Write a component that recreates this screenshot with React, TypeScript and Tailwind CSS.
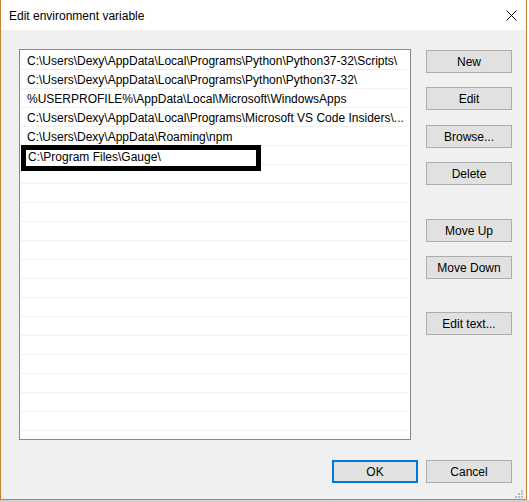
import React from "react";

const rows = [
  "C:\\Users\\Dexy\\AppData\\Local\\Programs\\Python\\Python37-32\\Scripts\\",
  "C:\\Users\\Dexy\\AppData\\Local\\Programs\\Python\\Python37-32\\",
  "%USERPROFILE%\\AppData\\Local\\Microsoft\\WindowsApps",
  "C:\\Users\\Dexy\\AppData\\Local\\Programs\\Microsoft VS Code Insiders\\...",
  "C:\\Users\\Dexy\\AppData\\Roaming\\npm",
];

function Btn({ label, className = "" }: { label: string; className?: string }) {
  return (
    <div
      className={
        "w-[86px] h-[23px] shrink-0 flex items-center justify-center bg-[#e1e1e1] border border-[#adadad] text-[12px] text-black leading-none " +
        className
      }
    >
      {label}
    </div>
  );
}

export default function App() {
  const empties = Array.from({ length: 16 });
  return (
    <div
      className="w-[529px] h-[502px] bg-white flex flex-col overflow-hidden"
      style={{ fontFamily: '"Liberation Sans", Arial, sans-serif' }}
    >
      <div className="w-[527px] h-[500px] border-l border-r border-b border-[#c98234] flex flex-col shrink-0">
        {/* Title bar */}
        <div className="h-[30px] bg-white flex items-center justify-between shrink-0">
          <span className="pl-[8px] text-[12px] text-black pt-[1px]">Edit environment variable</span>
          <svg width="11" height="11" viewBox="0 0 11 11" className="mr-[9px]">
            <path d="M0.5 0.5 L10.5 10.5 M10.5 0.5 L0.5 10.5" stroke="#000" strokeWidth="1" />
          </svg>
        </div>
        {/* Body */}
        <div className="flex-1 bg-[#f0f0f0] flex flex-col relative">
          <div className="flex pl-[18px] pt-[19px]">
            {/* List */}
            <div className="w-[392px] h-[391px] border border-[#828790] bg-white pt-[1px] overflow-hidden shrink-0">
              {rows.map((r) => (
                <div
                  key={r}
                  className="h-[19px] mx-[1px] mr-[3px] border-b border-[#f0f0f0] pl-[6px] pt-[2px] text-[12px] leading-[16px] text-black whitespace-nowrap overflow-hidden"
                >
                  {r}
                </div>
              ))}
              <div className="h-[19px] mx-[1px] mr-[3px] border-b border-[#f0f0f0] relative">
                <div className="absolute left-0 top-[-1px] w-[240px] h-[26px] border-[5px] border-black bg-white pl-[2px] text-[12px] leading-[15px] text-black whitespace-nowrap">
                  C:\Program Files\Gauge\
                </div>
              </div>
              {empties.map((_, i) => (
                <div key={i} className="h-[19px] mx-[1px] mr-[3px] border-b border-[#f0f0f0]" />
              ))}
            </div>
            {/* Right buttons */}
            <div className="flex flex-col ml-[15px] pt-[1px]">
              <Btn label="New" />
              <Btn label="Edit" className="mt-[14px]" />
              <Btn label="Browse..." className="mt-[15px]" />
              <Btn label="Delete" className="mt-[14px]" />
              <Btn label="Move Up" className="mt-[34px]" />
              <Btn label="Move Down" className="mt-[14px]" />
              <Btn label="Edit text..." className="mt-[33px]" />
            </div>
          </div>
          <div className="flex justify-end gap-[8px] pr-[14px] mt-[20px]">
            <div className="w-[86px] h-[23px] flex items-center justify-center bg-[#e1e1e1] border-2 border-[#0078d7] text-[12px] text-black leading-none">
              OK
            </div>
            <Btn label="Cancel" />
          </div>
          {/* resize grip */}
          <svg width="8" height="8" viewBox="0 0 8 8" className="absolute right-[3px] bottom-[1px]">
            <rect x="6" y="0" width="2" height="2" fill="#bcbcbc" />
            <rect x="3" y="3" width="2" height="2" fill="#bcbcbc" />
            <rect x="6" y="3" width="2" height="2" fill="#bcbcbc" />
            <rect x="0" y="6" width="2" height="2" fill="#bcbcbc" />
            <rect x="3" y="6" width="2" height="2" fill="#bcbcbc" />
            <rect x="6" y="6" width="2" height="2" fill="#bcbcbc" />
          </svg>
        </div>
      </div>
      <div className="h-[2px] w-[529px] bg-[#cfcfcf]" />
    </div>
  );
}
